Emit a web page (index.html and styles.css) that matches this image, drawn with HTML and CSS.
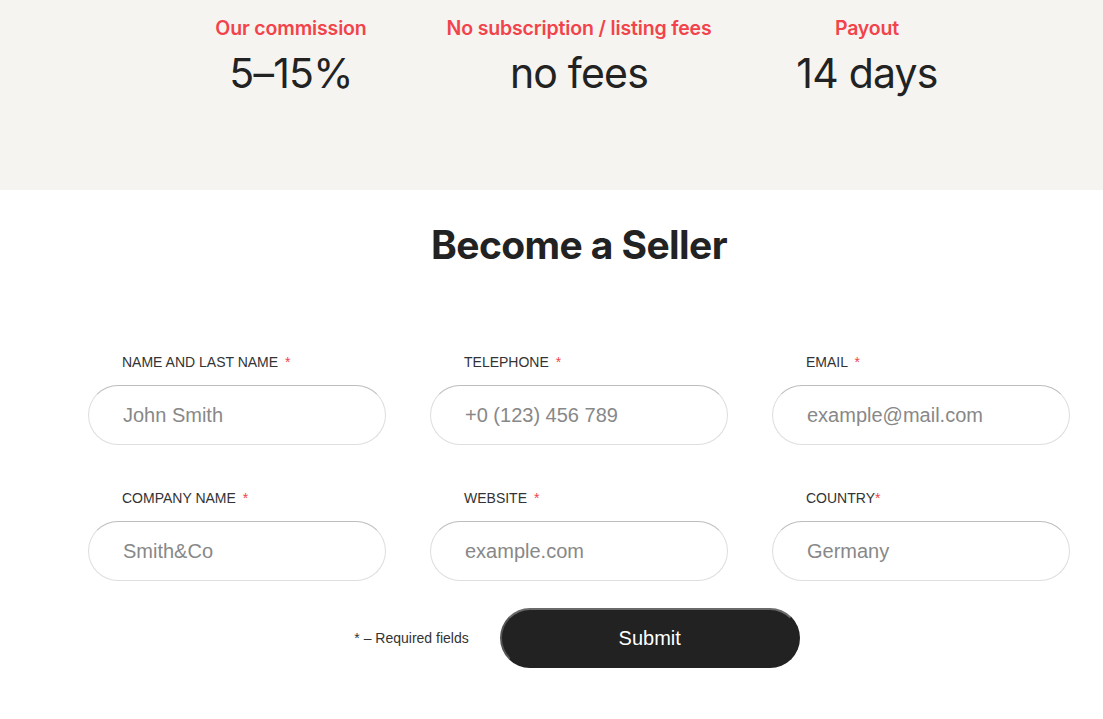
FILE: index.html
```html
<!DOCTYPE html>
<html>
<head>
<meta charset="utf-8">
<link rel="stylesheet" href="styles.css">
</head>
<body>
<section class="stats">
  <div class="stats-row">
    <div class="stat">
      <div class="stat-label">Our commission</div>
      <div class="stat-value">5–15%</div>
    </div>
    <div class="stat">
      <div class="stat-label">No subscription / listing fees</div>
      <div class="stat-value">no fees</div>
    </div>
    <div class="stat">
      <div class="stat-label">Payout</div>
      <div class="stat-value">14 days</div>
    </div>
  </div>
</section>
<section class="seller">
  <div class="wrap">
    <h1 class="title">Become a Seller</h1>
    <form class="form">
      <div class="grid">
        <label class="field">
          <span class="label">NAME AND LAST NAME <span class="req">*</span></span>
          <input class="input" type="text" placeholder="John Smith">
        </label>
        <label class="field">
          <span class="label">TELEPHONE <span class="req">*</span></span>
          <input class="input" type="text" placeholder="+0 (123) 456 789">
        </label>
        <label class="field">
          <span class="label">EMAIL <span class="req">*</span></span>
          <input class="input" type="text" placeholder="example@mail.com">
        </label>
        <label class="field">
          <span class="label">COMPANY NAME <span class="req">*</span></span>
          <input class="input" type="text" placeholder="Smith&amp;Co">
        </label>
        <label class="field">
          <span class="label">WEBSITE <span class="req">*</span></span>
          <input class="input" type="text" placeholder="example.com">
        </label>
        <label class="field">
          <span class="label">COUNTRY<span class="req tight">*</span></span>
          <input class="input" type="text" placeholder="Germany">
        </label>
      </div>
      <div class="submit-row">
        <span class="note">* – Required fields</span>
        <button class="submit" type="button">Submit</button>
      </div>
    </form>
  </div>
</section>
</body>
</html>
```

FILE: styles.css
```css
* { box-sizing: border-box; }
body {
  margin: 0;
  background: #fff;
  font-family: "Liberation Sans", Arial, sans-serif;
  color: #222;
}
.stats {
  background: #f5f4f0;
  height: 190px;
  padding-top: 15px;
}
.stats-row {
  display: flex;
  justify-content: center;
  width: 982px;
  margin-left: 88px;
}
.stat {
  width: 288px;
  text-align: center;
}
.stat-label {
  font-family: Inter, sans-serif;
  font-weight: 600;
  font-size: 19.5px;
  line-height: 26px;
  color: #f2434a;
  letter-spacing: -0.15px;
}
.stat-value {
  font-family: Inter, sans-serif;
  font-weight: 400;
  font-size: 41px;
  line-height: 52px;
  color: #222;
  margin-top: 6px;
  letter-spacing: -0.8px;
}
.seller {
  padding-top: 31px;
}
.wrap {
  width: 982px;
  margin-left: 88px;
}
.title {
  margin: 0;
  text-align: center;
  font-family: Inter, sans-serif;
  font-weight: 700;
  font-size: 39px;
  line-height: 48px;
  letter-spacing: -0.6px;
  color: #222;
}
.form {
  margin-top: 85px;
}
.grid {
  display: grid;
  grid-template-columns: repeat(3, 298px);
  column-gap: 44px;
  row-gap: 45px;
}
.field {
  display: flex;
  flex-direction: column;
  gap: 15px;
}
.label {
  padding-left: 34px;
  font-size: 14px;
  line-height: 16px;
  color: #333;
}
.req {
  color: #f2434a;
  margin-left: 3px;
}
.req.tight { margin-left: 0; }
.input {
  height: 60px;
  border-radius: 30px;
  border: 1px solid #dedede;
  border-top-color: #bdbdbd;
  padding: 0 34px;
  font-family: "Liberation Sans", Arial, sans-serif;
  font-size: 20px;
  color: #333;
  background: #fff;
  outline: none;
}
.input::placeholder { color: #888; }
.submit-row {
  display: flex;
  justify-content: center;
  align-items: center;
  gap: 31px;
  margin-top: 27px;
  padding-right: 4px;
}
.note {
  font-size: 14px;
  color: #333;
}
.submit {
  width: 300px;
  height: 60px;
  border-radius: 30px;
  background: #222;
  border: 2px solid #222;
  border-top-color: #6a6a6a;
  border-left-color: #555;
  color: #fff;
  font-family: "Liberation Sans", Arial, sans-serif;
  font-size: 20px;
  cursor: pointer;
}
```
